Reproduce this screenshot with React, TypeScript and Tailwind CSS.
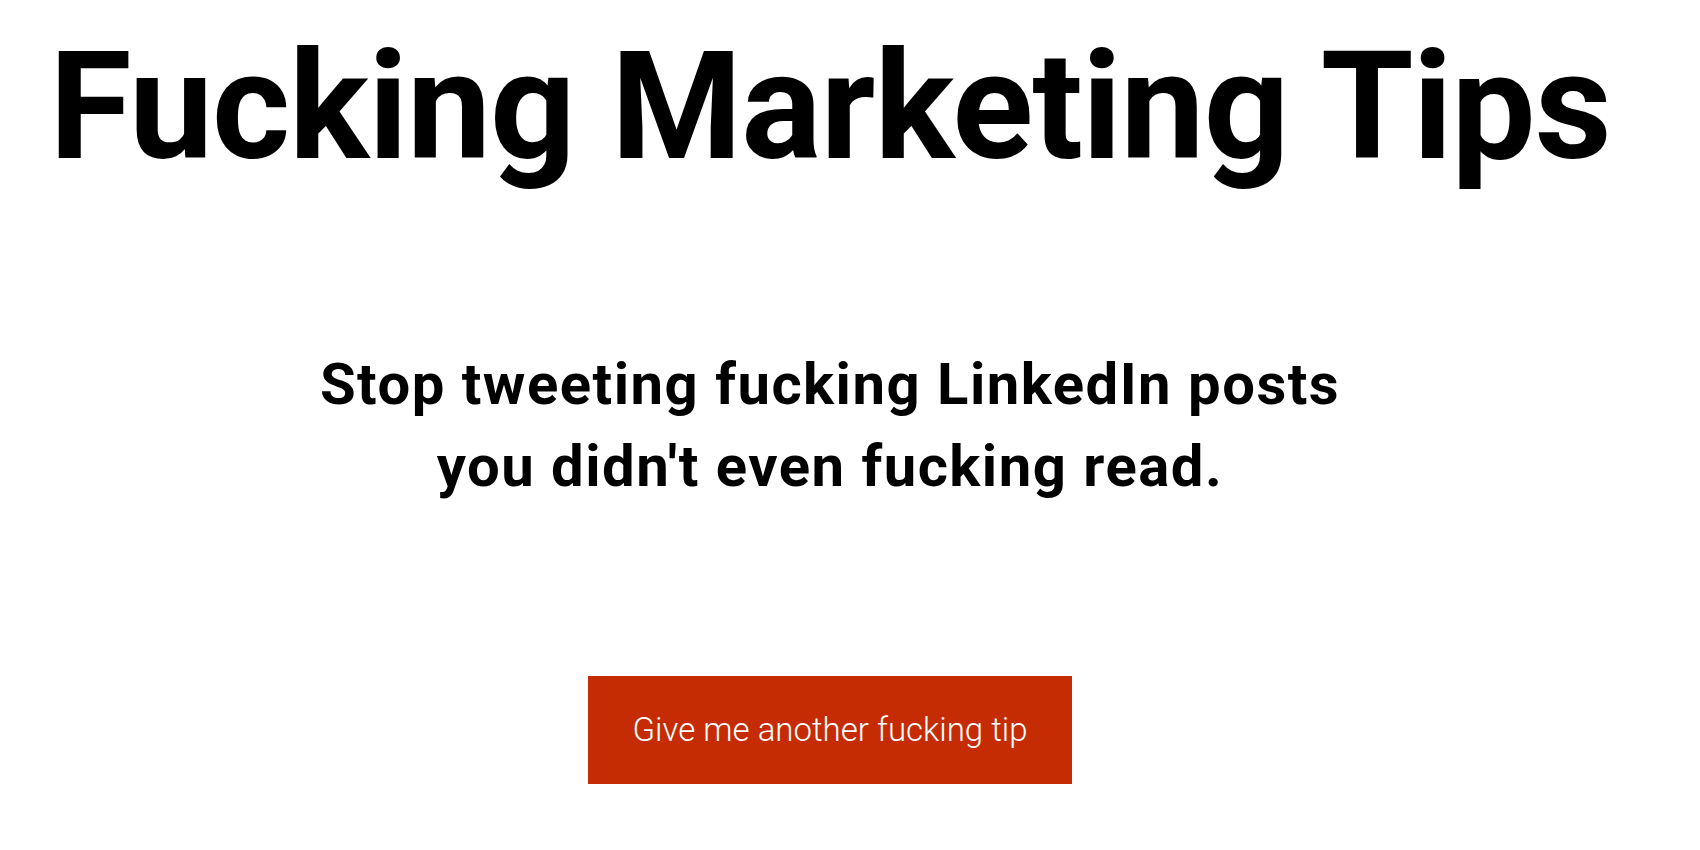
import React from 'react';

const tips = [
  ["Stop tweeting fucking LinkedIn posts", "you didn't even fucking read."],
];

const App: React.FC = () => {
  const tip = tips[0];

  return (
    <div className="min-h-screen w-full bg-white text-black" style={{ fontFamily: 'Roboto, "Noto Sans", sans-serif' }}>
      <div className="w-[1660px] flex flex-col items-center text-center">
        <h1 className="pt-[32px] text-[150px] leading-[150px] font-bold tracking-[-1px] whitespace-nowrap">
          Fucking Marketing Tips
        </h1>

        <p className="mt-[161px] text-[58px] leading-[82px] font-bold tracking-[1.5px]">
          {tip.map((line) => (
            <span key={line} className="block whitespace-nowrap">
              {line}
            </span>
          ))}
        </p>

        <button
          type="button"
          className="mt-[169px] w-[484px] h-[108px] bg-[#c52c03] text-white text-[33px] font-light"
        >
          Give me another fucking tip
        </button>
      </div>
    </div>
  );
};

export default App;
